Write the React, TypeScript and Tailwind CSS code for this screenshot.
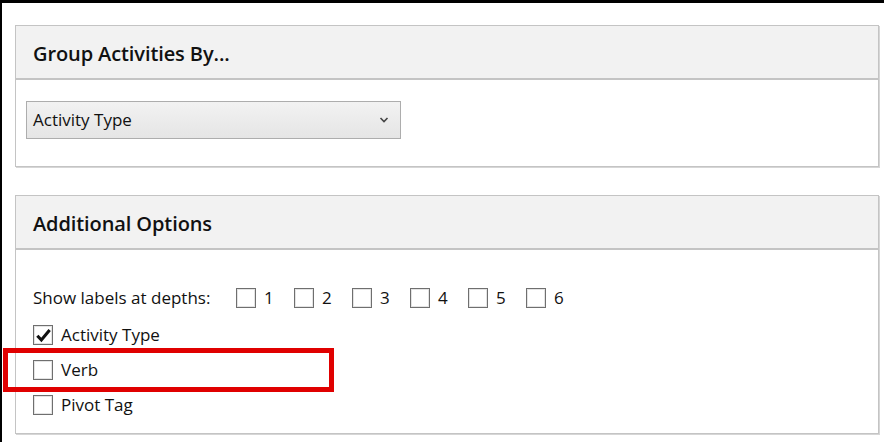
import type { ReactNode } from "react";

const FONT = { fontFamily: '"Open Sans", "Noto Sans", "Liberation Sans", sans-serif' };

function Panel({ title, children }: { title: string; children: ReactNode }) {
  return (
    <section className="border border-[#c4c4c4] shadow-[1px_1px_0_#d6d6d6] bg-white">
      <div className="h-[54px] bg-[#f2f2f2] border-b-2 border-[#c4c4c4] flex items-center pl-[17px] pt-[3px]">
        <h2 className="text-[20px] font-semibold text-[#111] tracking-[-0.1px]">{title}</h2>
      </div>
      {children}
    </section>
  );
}

function Box({ checked = false }: { checked?: boolean }) {
  return (
    <span className="w-[20px] h-[20px] shrink-0 border border-[#6f6f6f] bg-white shadow-[inset_0_0_0_1px_#e4e4e4] flex items-center justify-center">
      {checked && (
        <svg width="17" height="17" viewBox="0 0 16 16">
          <path d="M2.2 8.2 L6 12.2 L13.8 2.8" fill="none" stroke="#111" strokeWidth="2.9" />
        </svg>
      )}
    </span>
  );
}

function CheckRow({ label, checked, className = "" }: { label: string; checked?: boolean; className?: string }) {
  return (
    <label className={`flex items-center h-[24px] gap-[8px] ${className}`}>
      <Box checked={checked} />
      <span>{label}</span>
    </label>
  );
}

export default function App() {
  return (
    <div
      className="relative w-[884px] h-[442px] overflow-hidden bg-white border-t-[3px] border-l-2 border-black text-[17px] text-[#111]"
      style={FONT}
    >
      <div className="pl-[13px] pr-[5px] pt-[22px] flex flex-col gap-[28px]">
        <Panel title="Group Activities By...">
          <div className="pl-[10px] pt-[21px] pb-[27px]">
            <div className="w-[375px] h-[38px] border border-[#adadad] bg-gradient-to-b from-[#f2f2f2] to-[#e5e5e5] flex items-center justify-between pl-[6px] pr-[11px]">
              <span>Activity Type</span>
              <svg width="10" height="8" viewBox="0 0 10 8">
                <path d="M1.5 2 L5 5.5 L8.5 2" fill="none" stroke="#444" strokeWidth="1.6" />
              </svg>
            </div>
          </div>
        </Panel>

        <Panel title="Additional Options">
          <div className="pl-[17px] pt-[36px] pb-[16px]">
            <div className="flex items-center h-[24px]">
              <span className="w-[203px]">Show labels at depths:</span>
              <div className="flex items-center">
                {[1, 2, 3, 4, 5, 6].map((n) => (
                  <label key={n} className="flex items-center gap-[8px] w-[58px]">
                    <Box />
                    <span>{n}</span>
                  </label>
                ))}
              </div>
            </div>
            <CheckRow label="Activity Type" checked className="mt-[13px]" />
            <CheckRow label="Verb" className="mt-[11px]" />
            <CheckRow label="Pivot Tag" className="mt-[11px]" />
          </div>
        </Panel>
      </div>

      {/* highlight annotation */}
      <div className="absolute left-[1px] top-[345px] w-[331px] h-[44px] border-[5px] border-[#e00000] pointer-events-none" />
    </div>
  );
}
